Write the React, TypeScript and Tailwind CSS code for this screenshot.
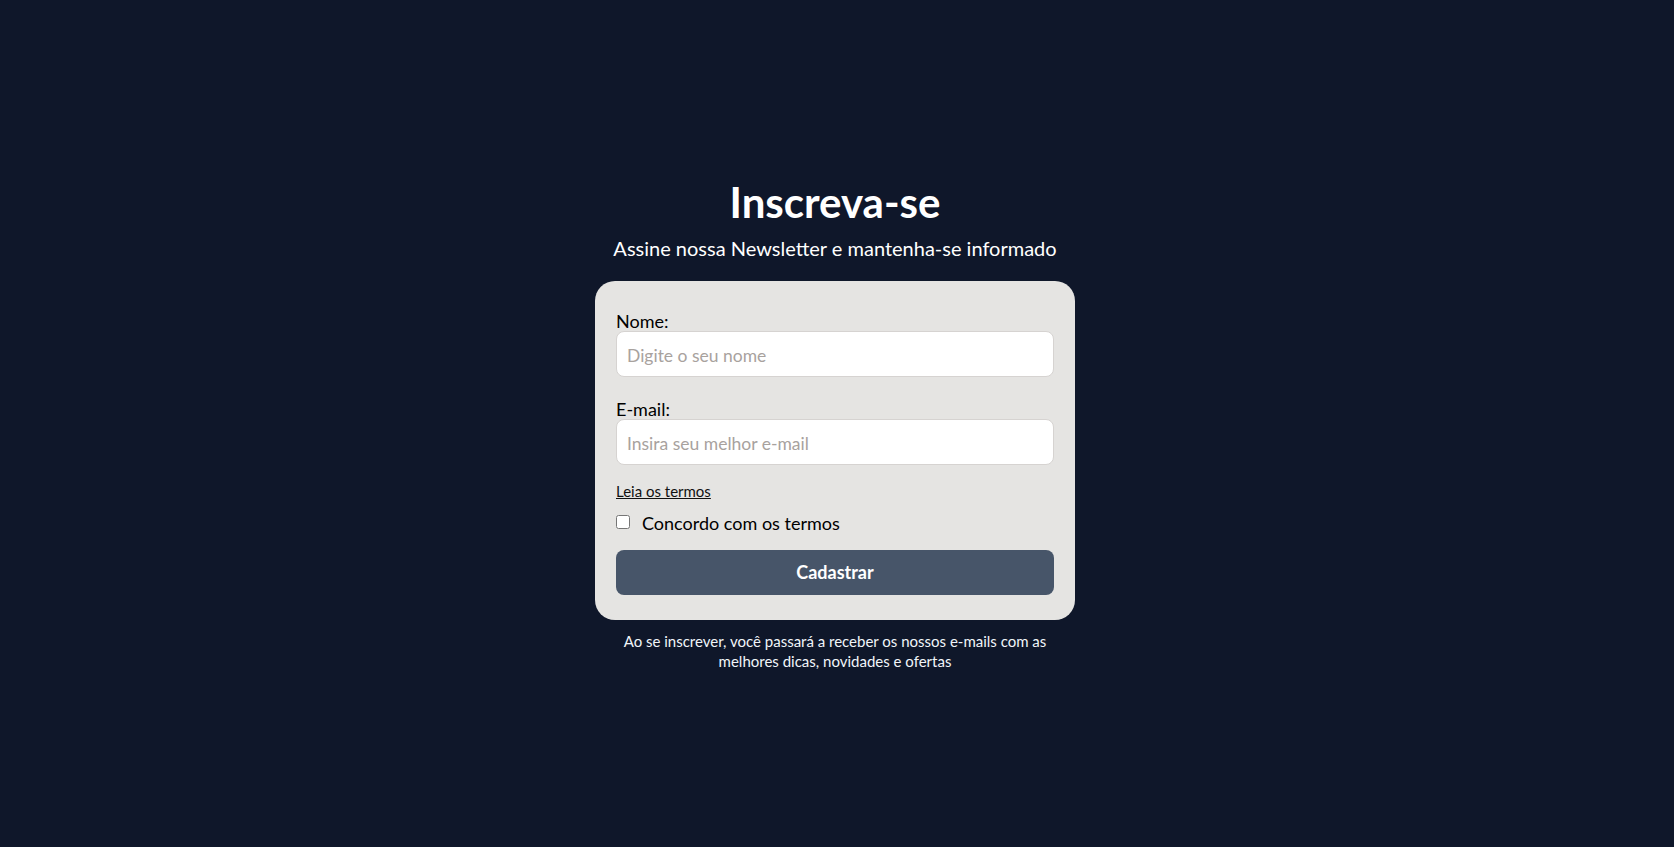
import React, { useState } from 'react';

const App = () => {
  const [nome, setNome] = useState('');
  const [email, setEmail] = useState('');
  const [aceito, setAceito] = useState(false);

  return (
    <div
      className="min-h-screen w-full bg-[#0f172a] flex flex-col items-center justify-center pr-[4px] text-white"
      style={{ fontFamily: 'Lato, "Noto Sans", sans-serif' }}
    >
      {/* Header */}
      <h1 className="text-[42px] leading-[50px] font-bold">Inscreva-se</h1>
      <p className="mt-[7px] text-[20px] leading-7">Assine nossa Newsletter e mantenha-se informado</p>

      {/* Form card */}
      <form
        className="mt-[19px] w-[480px] bg-[#e5e4e2] rounded-[20px] px-[21px] pt-[30px] pb-[25px] text-black"
        onSubmit={(e) => e.preventDefault()}
      >
        <label htmlFor="nome" className="block text-[18px] leading-5">Nome:</label>
        <input
          id="nome"
          type="text"
          value={nome}
          onChange={(e) => setNome(e.target.value)}
          placeholder="Digite o seu nome"
          className="block w-full h-[46px] px-[10px] pt-[3px] bg-white border border-[#d6d3d1] rounded-[8px] text-[17.5px] placeholder:text-[#a8a29e] outline-none"
        />

        <label htmlFor="email" className="block mt-[22px] text-[18px] leading-5">E-mail:</label>
        <input
          id="email"
          type="email"
          value={email}
          onChange={(e) => setEmail(e.target.value)}
          placeholder="Insira seu melhor e-mail"
          className="block w-full h-[46px] px-[10px] pt-[3px] bg-white border border-[#d6d3d1] rounded-[8px] text-[17.5px] placeholder:text-[#a8a29e] outline-none"
        />

        <a href="#" className="block w-fit mt-4 text-[15px] leading-5 underline text-[#111]">Leia os termos</a>

        <label className="mt-[11px] flex items-center h-6 text-[18px]">
          <input
            type="checkbox"
            checked={aceito}
            onChange={(e) => setAceito(e.target.checked)}
            className="w-[14px] h-[14px] m-0 mr-3 -translate-y-[2px]"
          />
          Concordo com os termos
        </label>

        <button
          type="submit"
          className="mt-[14px] w-full h-[45px] rounded-[8px] bg-[#475569] text-white text-[18px] font-bold"
        >
          Cadastrar
        </button>
      </form>

      <p className="mt-[11px] text-[15px] leading-5 text-center text-[#f1f5f9]">
        Ao se inscrever, você passará a receber os nossos e-mails com as
        <br />
        melhores dicas, novidades e ofertas
      </p>
    </div>
  );
};

export default App;
